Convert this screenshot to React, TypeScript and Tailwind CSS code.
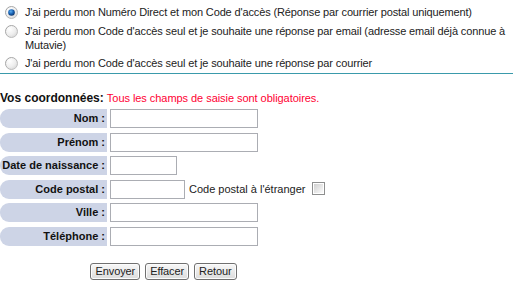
import React from "react";

function Radio({ checked }: { checked?: boolean }) {
  return (
    <svg width="13" height="13" viewBox="0 0 13 13" className="shrink-0">
      <defs>
        <linearGradient id="rb" x1="0" y1="0" x2="1" y2="1">
          <stop offset="0" stopColor="#9a9a9a" />
          <stop offset="1" stopColor="#c8c8c8" />
        </linearGradient>
        <radialGradient id="rf" cx="0.35" cy="0.3" r="0.8">
          <stop offset="0" stopColor="#ffffff" />
          <stop offset="0.6" stopColor="#eeeeee" />
          <stop offset="1" stopColor="#d4d4d4" />
        </radialGradient>
        <radialGradient id="rd" cx="0.4" cy="0.35" r="0.7">
          <stop offset="0" stopColor="#5fb0f0" />
          <stop offset="0.5" stopColor="#1b66b8" />
          <stop offset="1" stopColor="#0b2f62" />
        </radialGradient>
      </defs>
      <circle cx="6.5" cy="6.5" r="6" fill="url(#rf)" stroke="url(#rb)" strokeWidth="1" />
      {checked && <circle cx="6.5" cy="6.5" r="3.3" fill="url(#rd)" />}
    </svg>
  );
}

function Checkbox() {
  return (
    <svg width="13" height="13" viewBox="0 0 13 13" className="shrink-0">
      <defs>
        <linearGradient id="cf" x1="0" y1="0" x2="1" y2="1">
          <stop offset="0" stopColor="#d0d0d0" />
          <stop offset="1" stopColor="#fbfbfb" />
        </linearGradient>
      </defs>
      <rect x="0.5" y="0.5" width="12" height="12" fill="#ffffff" stroke="#8e8f8f" />
      <rect x="2" y="2" width="9" height="9" fill="url(#cf)" />
    </svg>
  );
}

function Label({ children }: { children: React.ReactNode }) {
  return (
    <div className="w-[107px] h-[19px] shrink-0 bg-[#cdd4e6] rounded-l-[9px] text-right pr-[2px] font-bold leading-[19px] text-[#111] whitespace-nowrap">
      {children}
    </div>
  );
}

function Input({ w }: { w: string }) {
  return <div className={`${w} h-[19px] ml-[3px] border border-[#abadb3] bg-white shrink-0`} />;
}

export default function App() {
  return (
    <div className="w-[513px] h-[283px] bg-white text-[11px] leading-[14px] text-[#222] font-['Liberation_Sans',Arial,sans-serif] overflow-hidden">
      <div className="pt-[5px] tracking-[-0.13px]">
        <div className="flex items-start">
          <div className="ml-[5px] mt-[1px]">
            <Radio checked />
          </div>
          <div className="ml-[7px] whitespace-nowrap">
            J'ai perdu mon Numéro Direct et mon Code d'accès (Réponse par courrier postal uniquement)
          </div>
        </div>
        <div className="flex items-start mt-[5px]">
          <div className="ml-[5px] mt-[1px]">
            <Radio />
          </div>
          <div className="ml-[7px] whitespace-nowrap">
            J'ai perdu mon Code d'accès seul et je souhaite une réponse par email (adresse email déjà connue à
            <br />
            Mutavie)
          </div>
        </div>
        <div className="flex items-start mt-[4px]">
          <div className="ml-[5px] mt-[1px]">
            <Radio />
          </div>
          <div className="ml-[7px] whitespace-nowrap">
            J'ai perdu mon Code d'accès seul et je souhaite une réponse par courrier
          </div>
        </div>
      </div>
      <div className="mt-[3px] h-px bg-[#3a9aab]" />
      <div className="mt-[17px] whitespace-nowrap">
        <span className="font-bold text-[12px] text-[#111]">Vos coordonnées:</span>{" "}
        <span className="text-[#ff0033] tracking-[-0.05px]">Tous les champs de saisie sont obligatoires.</span>
      </div>
      <div className="mt-[4px] flex flex-col gap-[4.6px]">
        <div className="flex items-center">
          <Label>Nom :</Label>
          <Input w="w-[148px]" />
        </div>
        <div className="flex items-center">
          <Label>Prénom :</Label>
          <Input w="w-[148px]" />
        </div>
        <div className="flex items-center">
          <Label>Date de naissance :</Label>
          <Input w="w-[67px]" />
        </div>
        <div className="flex items-center">
          <Label>Code postal :</Label>
          <Input w="w-[75px]" />
          <span className="ml-[4px] whitespace-nowrap">Code postal à l'étranger</span>
          <div className="ml-[7px] -mt-[2px]">
            <Checkbox />
          </div>
        </div>
        <div className="flex items-center">
          <Label>Ville :</Label>
          <Input w="w-[148px]" />
        </div>
        <div className="flex items-center">
          <Label>Téléphone :</Label>
          <Input w="w-[148px]" />
        </div>
      </div>
      <div className="w-[327px] mt-[17px] flex justify-center gap-[5px]">
        {["Envoyer", "Effacer", "Retour"].map((t) => (
          <button
            key={t}
            className="h-[17px] px-[4px] text-[11px] leading-[15px] tracking-[-0.1px] text-[#222] border border-[#707070] rounded-[3px] bg-gradient-to-b from-[#f8f8f8] to-[#dcdcdc] shadow-[inset_0_0_0_1px_#fcfcfc]"
          >
            {t}
          </button>
        ))}
      </div>
    </div>
  );
}
